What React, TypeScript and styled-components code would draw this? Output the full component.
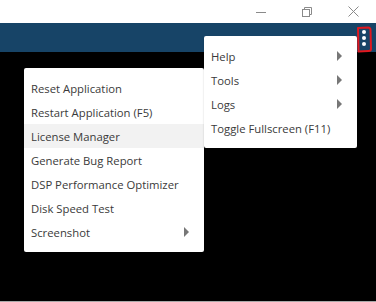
import React from 'react';
import styled, { createGlobalStyle } from 'styled-components';

const GlobalStyle = createGlobalStyle`
  html, body {
    margin: 0;
    padding: 0;
    background: #ffffff;
  }
  body {
    font-family: 'Open Sans', 'Noto Sans', sans-serif;
  }
`;

const Window = styled.div`
  position: relative;
  width: 376px;
  height: 302px;
  display: flex;
  flex-direction: column;
  overflow: hidden;
`;

const TitleBar = styled.div`
  height: 23px;
  display: flex;
  justify-content: flex-end;
  background: #ffffff;
`;

const CaptionButton = styled.div`
  width: 46px;
  height: 23px;
  display: flex;
  align-items: center;
  justify-content: center;
  color: #8a8a8a;
`;

const Toolbar = styled.div`
  height: 29px;
  background: #174467;
  display: flex;
  justify-content: flex-end;
  align-items: center;
  padding-right: 8px;
`;

const KebabButton = styled.div`
  display: flex;
  flex-direction: column;
  align-items: center;
  gap: 2px;
  width: 8px;
`;

const Dot = styled.span`
  width: 4px;
  height: 4px;
  border-radius: 50%;
  background: #ffffff;
`;

const Content = styled.div`
  flex: 1;
  background: #000000;
  border-bottom: 1px solid #a9a9a9;
`;

const Menu = styled.ul<{ $left: number; $top: number; $width: number }>`
  position: absolute;
  left: ${(p) => p.$left}px;
  top: ${(p) => p.$top}px;
  width: ${(p) => p.$width}px;
  margin: 0;
  padding: 8px 0;
  list-style: none;
  background: #ffffff;
  border-radius: 2px;
  box-shadow: 0 1px 2px rgba(0, 0, 0, 0.2);
  box-sizing: border-box;
`;

const MenuItem = styled.li<{ $active?: boolean }>`
  height: 24px;
  display: flex;
  align-items: center;
  justify-content: space-between;
  padding: 0 15px 0 7px;
  font-size: 11.3px;
  color: #3a3a3a;
  white-space: nowrap;
  background: ${(p) => (p.$active ? '#f2f2f2' : 'transparent')};
`;

const Arrow = styled.span`
  width: 0;
  height: 0;
  border-top: 5px solid transparent;
  border-bottom: 5px solid transparent;
  border-left: 5px solid #777777;
`;

const Annotation = styled.svg`
  position: absolute;
  left: 355px;
  top: 25px;
`;

const MinimizeIcon = () => (
  <svg width="10" height="10" viewBox="0 0 10 10">
    <path d="M0 5.5 H10" stroke="currentColor" strokeWidth="1" />
  </svg>
);

const RestoreIcon = () => (
  <svg width="10" height="10" viewBox="0 0 10 10" fill="none">
    <path d="M2.5 2.5 V0.5 H9.5 V7.5 H7.5" stroke="currentColor" strokeWidth="1" />
    <rect x="0.5" y="2.5" width="7" height="7" stroke="currentColor" strokeWidth="1" />
  </svg>
);

const CloseIcon = () => (
  <svg width="11" height="11" viewBox="0 0 11 11">
    <path d="M0.5 0.5 L10.5 10.5 M10.5 0.5 L0.5 10.5" stroke="currentColor" strokeWidth="1" />
  </svg>
);

type Item = { label: string; submenu?: boolean; active?: boolean };

const mainItems: Item[] = [
  { label: 'Help', submenu: true },
  { label: 'Tools', submenu: true },
  { label: 'Logs', submenu: true },
  { label: 'Toggle Fullscreen (F11)' },
];

const toolItems: Item[] = [
  { label: 'Reset Application' },
  { label: 'Restart Application (F5)' },
  { label: 'License Manager', active: true },
  { label: 'Generate Bug Report' },
  { label: 'DSP Performance Optimizer' },
  { label: 'Disk Speed Test' },
  { label: 'Screenshot', submenu: true },
];

const renderItems = (items: Item[]) =>
  items.map((item) => (
    <MenuItem key={item.label} $active={item.active}>
      <span>{item.label}</span>
      {item.submenu && <Arrow />}
    </MenuItem>
  ));

const App = () => {
  return (
    <>
      <GlobalStyle />
      <Window>
        <TitleBar>
          <CaptionButton>
            <MinimizeIcon />
          </CaptionButton>
          <CaptionButton>
            <RestoreIcon />
          </CaptionButton>
          <CaptionButton>
            <CloseIcon />
          </CaptionButton>
        </TitleBar>
        <Toolbar>
          <KebabButton>
            <Dot />
            <Dot />
            <Dot />
          </KebabButton>
        </Toolbar>
        <Content />

        <Menu $left={24} $top={68} $width={180}>
          {renderItems(toolItems)}
        </Menu>
        <Menu $left={204} $top={36} $width={153}>
          {renderItems(mainItems)}
        </Menu>

        <Annotation width="20" height="30" viewBox="0 0 20 30" fill="none">
          <path
            d="M3 3 L13 2.5 Q15.5 2.5 15.5 5 L16 24 Q16 26 13.5 26 L3.5 26.5 M3.5 25 L3 3"
            stroke="#e0181f"
            strokeWidth="2"
            strokeLinecap="round"
            strokeLinejoin="round"
          />
        </Annotation>
      </Window>
    </>
  );
};

export default App;
